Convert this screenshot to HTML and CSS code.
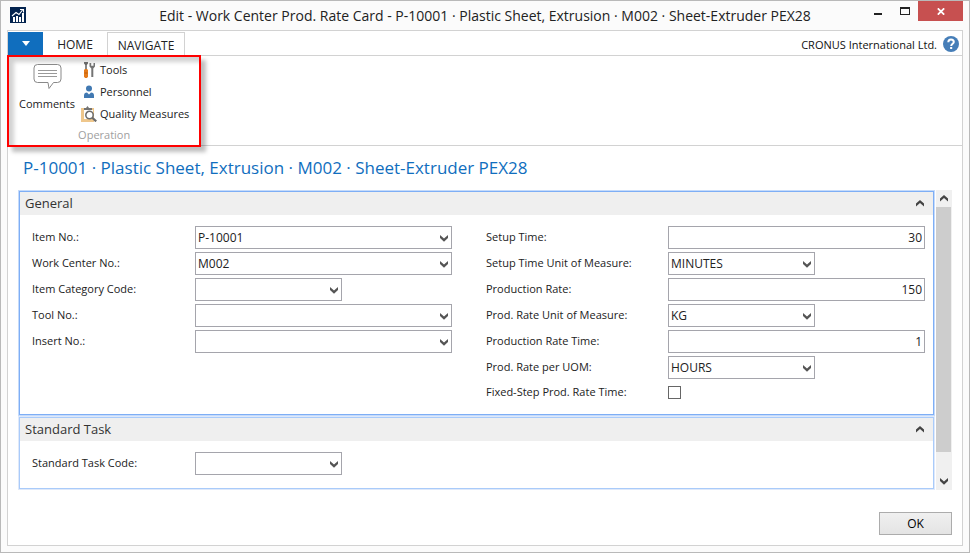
FILE: index.html
```html
<!DOCTYPE html>
<html lang="en">
<head>
<meta charset="utf-8">
<meta name="viewport" content="width=device-width, initial-scale=1">
<title>Edit - Work Center Prod. Rate Card</title>
<link rel="stylesheet" href="styles.css">
</head>
<body>
<svg class="defs" aria-hidden="true">
  <symbol id="down" viewBox="0 0 8 7"><path d="M0 0L4 3.6L8 0V3L4 6.8L0 3Z"/></symbol>
  <symbol id="up" viewBox="0 0 8 7"><path d="M0 6.4L4 3L8 6.4V3.6L4 0L0 3.6Z"/></symbol>
</svg>
<div class="window">
  <header class="titlebar">
    <div class="title-left">
      <svg class="app-icon" viewBox="0 0 16 16" aria-hidden="true">
        <rect width="16" height="16" fill="#04244f"/>
        <path d="M3 10h2v5H3zM6 9h2v6H6zM9 10h2v5H9zM12 6h2v9h-2z" fill="#fff"/>
        <path d="M2 9L6 5.500L9 7.500L12.500 3M10 2.500h3.500V5.500" fill="none" stroke="#fff" stroke-width="1.100"/>
      </svg>
    </div>
    <div class="window-title">Edit - Work Center Prod. Rate Card - P-10001 · Plastic Sheet, Extrusion · M002 · Sheet-Extruder PEX28</div>
    <div class="window-buttons">
      <button class="win-btn" aria-label="Minimize"><svg width="8" height="8" viewBox="0 0 8 8"><path d="M0 6h8v2H0z" fill="#222"/></svg></button>
      <button class="win-btn" aria-label="Maximize"><svg width="10" height="8" viewBox="0 0 10 8"><path d="M0 0h10v8H0zM1 2v5h8V2z" fill="#222" fill-rule="evenodd"/></svg></button>
      <button class="win-btn close" aria-label="Close"><svg width="8" height="7" viewBox="0 0 8 7"><path d="M.8 .3L7.200 6.700M7.200 .3L.8 6.700" stroke="#fff" stroke-width="1.700"/></svg></button>
    </div>
  </header>

  <div class="frame">
    <nav class="tabs">
      <button class="app-menu" aria-label="Application menu"><svg width="8" height="5" viewBox="0 0 8 5"><path d="M0 0h8L4 5z" fill="#fff"/></svg></button>
      <button class="tab">HOME</button>
      <button class="tab active">NAVIGATE</button>
      <div class="company">CRONUS International Ltd.</div>
      <button class="help" aria-label="Help"><svg width="16" height="16" viewBox="0 0 16 16"><circle cx="8" cy="8" r="8" fill="#467eb8"/><path d="M5.300 6.200C5.300 4.300 6.500 3.400 8 3.400S10.800 4.300 10.800 5.900C10.800 7.700 8.200 7.800 8.200 10" fill="none" stroke="#fff" stroke-width="2"/><path d="M7.100 11h2.100v2H7.100z" fill="#fff"/></svg></button>
    </nav>
    <div class="ribbon">
      <section class="group">
        <div class="group-items">
          <button class="big-action">
            <svg width="29" height="27" viewBox="0 0 29 27" fill="none"><path d="M4.500 1.500h20a3.500 3.500 0 0 1 3.500 3.500v11a3.500 3.500 0 0 1-3.500 3.500h-4l-4.500 6-1-6H4.500A3.500 3.500 0 0 1 1 16V5a3.500 3.500 0 0 1 3.500-3.500z" fill="#fff" stroke="#898989"/><path d="M5 7.500h19M5 10.500h19M5 13.500h19" stroke="#999"/></svg>
            Comments
          </button>
          <div class="actions">
            <button class="action">
              <svg width="16" height="16" viewBox="0 0 16 16"><path d="M3 0h4v1.500L5.800 3v4H4.200V3L3 1.500z" fill="#696969"/><path d="M4 7h2l1 1v6.500L6 16H4l-1-1.500V8z" fill="#e47a1b"/><path d="M3.500 11h3" stroke="#b95c0b"/><path d="M8.500 1v3.500L10.300 6.500V15h2V6.500L14 4.500V1h-1.500v2.700h-2.300V1z" fill="#747474"/></svg>Tools</button>
            <button class="action">
              <svg width="16" height="16" viewBox="0 0 16 16"><circle cx="8" cy="4.500" r="3" fill="#4179b2"/><path d="M3 14V11.500Q3 8.500 6 8.500L8 10.500L10 8.500Q13 8.500 13 11.500V14z" fill="#4179b2"/></svg>Personnel</button>
            <button class="action">
              <svg width="16" height="16" viewBox="0 0 16 16"><path d="M0 2h13v14H0z" fill="#efc78c"/><path d="M3 4h9v9H3z" fill="#fff"/><path d="M3 4V2h2L6.500 0L8 2h3v2z" fill="#737373"/><circle cx="8.500" cy="9" r="3.700" fill="#fff" stroke="#6b6b6b" stroke-width="1.500"/><path d="M11.300 11.700L15.200 15.400" stroke="#6b6b6b" stroke-width="2.200"/></svg>Quality Measures</button>
          </div>
        </div>
        <div class="group-name">Operation</div>
      </section>
    </div>

    <main class="page">
      <h1>P-10001 · Plastic Sheet, Extrusion · M002 · Sheet-Extruder PEX28</h1>
      <div class="scroll-area">
        <form class="fasttabs">
          <section class="fasttab selected">
            <button type="button" class="fasttab-head">General<svg class="chevron"><use href="#up"/></svg></button>
            <div class="fields">
              <div class="column left">
                <div class="field"><label for="item">Item No.:</label><span class="control"><select id="item"><option>P-10001</option></select><svg class="arrow"><use href="#down"/></svg></span></div>
                <div class="field"><label for="center">Work Center No.:</label><span class="control"><select id="center"><option>M002</option></select><svg class="arrow"><use href="#down"/></svg></span></div>
                <div class="field"><label for="category">Item Category Code:</label><span class="control short"><select id="category"><option></option></select><svg class="arrow"><use href="#down"/></svg></span></div>
                <div class="field"><label for="tool">Tool No.:</label><span class="control"><select id="tool"><option></option></select><svg class="arrow"><use href="#down"/></svg></span></div>
                <div class="field"><label for="insert">Insert No.:</label><span class="control"><select id="insert"><option></option></select><svg class="arrow"><use href="#down"/></svg></span></div>
              </div>
              <div class="column right">
                <div class="field"><label for="setup">Setup Time:</label><span class="control"><input id="setup" type="text" value="30"></span></div>
                <div class="field"><label for="setup-unit">Setup Time Unit of Measure:</label><span class="control short"><select id="setup-unit"><option>MINUTES</option></select><svg class="arrow"><use href="#down"/></svg></span></div>
                <div class="field"><label for="rate">Production Rate:</label><span class="control"><input id="rate" type="text" value="150"></span></div>
                <div class="field"><label for="rate-unit">Prod. Rate Unit of Measure:</label><span class="control short"><select id="rate-unit"><option>KG</option></select><svg class="arrow"><use href="#down"/></svg></span></div>
                <div class="field"><label for="rate-time">Production Rate Time:</label><span class="control"><input id="rate-time" type="text" value="1"></span></div>
                <div class="field"><label for="per">Prod. Rate per UOM:</label><span class="control short"><select id="per"><option>HOURS</option></select><svg class="arrow"><use href="#down"/></svg></span></div>
                <div class="field check"><label for="fixed">Fixed-Step Prod. Rate Time:</label><input id="fixed" type="checkbox"></div>
              </div>
            </div>
          </section>
          <section class="fasttab">
            <button type="button" class="fasttab-head">Standard Task<svg class="chevron"><use href="#up"/></svg></button>
            <div class="fields">
              <div class="column left">
                <div class="field"><label for="task">Standard Task Code:</label><span class="control short"><select id="task"><option></option></select><svg class="arrow"><use href="#down"/></svg></span></div>
              </div>
              <div class="column right"></div>
            </div>
          </section>
        </form>
        <div class="scrollbar">
          <button aria-label="Scroll up"><svg class="chevron"><use href="#up"/></svg></button>
          <div class="track"><div class="thumb"></div></div>
          <button aria-label="Scroll down"><svg class="chevron"><use href="#down"/></svg></button>
        </div>
      </div>
      <footer><button class="ok">OK</button></footer>
    </main>
  </div>
</div>
</body>
</html>
```
FILE: styles.css
```css
* { box-sizing: border-box; }

body {
  margin: 0;
  font-family: "Open Sans", "Noto Sans", sans-serif;
  font-size: 12px;
  line-height: 16px;
  color: #222;
}

button, input, select { font: inherit; color: inherit; }

button {
  margin: 0;
  padding: 0;
  border: 0;
  background: none;
}

svg { display: block; flex: none; }
.defs { position: absolute; width: 0; height: 0; }

.window {
  display: flex;
  flex-direction: column;
  min-height: 100vh;
  padding: 0 6px 6px;
  border: 1px solid #b9b9b9;
  background: #fbfbfb;
}

/* Title bar */
.titlebar {
  display: flex;
  align-items: flex-start;
  height: 29px;
}
.title-left { flex: 0 0 99px; padding: 6px 0 0 3px; }
.app-icon { width: 16px; height: 16px; }
.window-title {
  flex: 1;
  padding-top: 4px;
  font-size: 14px;
  line-height: 22px;
  text-align: center;
  white-space: nowrap;
}
.window-buttons { display: flex; }
.win-btn {
  display: flex;
  align-items: center;
  justify-content: center;
  width: 27px;
  height: 20px;
}
.win-btn.close { width: 45px; background: #c75050; }

.frame {
  display: flex;
  flex: 1;
  flex-direction: column;
  border: 1px solid #d2d2d2;
  background: #fff;
}

/* Tabs */
.tabs {
  display: flex;
  align-items: flex-end;
  height: 24px;
  padding-right: 3px;
}
.app-menu {
  display: flex;
  align-items: center;
  justify-content: center;
  width: 35px;
  height: 23px;
  background: #106ebe;
}
.tab { width: 64px; height: 23px; padding-top: 3px; }
.tab.active {
  width: 78px;
  border: 1px solid #d2d2d2;
  border-bottom: 0;
}
.company { margin-left: auto; padding-bottom: 2px; font-size: 11px; color: #111; }
.help { padding: 0 0 3px 6px; }

/* Ribbon */
.ribbon {
  display: flex;
  height: 91px;
  border-top: 1px solid #d2d2d2;
  border-bottom: 1px solid #d2d2d2;
}
.group {
  height: 92px;
  margin: -1px 0 0 -1px;
  padding: 2px 10px 0;
  border: 2px solid #f00;
  box-shadow: 5px 5px 4px rgba(0, 0, 0, .25), inset 5px 5px 4px rgba(0, 0, 0, .18);
}
.group-items { display: flex; gap: 6px; font-size: 11px; }
.big-action {
  display: flex;
  flex-direction: column;
  align-items: center;
  gap: 6px;
  padding-top: 4px;
}
.actions { display: flex; flex-direction: column; }
.action {
  display: flex;
  align-items: center;
  gap: 3px;
  height: 22px;
  white-space: nowrap;
}
.group-name {
  padding-top: 2px;
  font-size: 11px;
  text-align: center;
  color: #a0a0a0;
}

/* Page */
.page {
  display: flex;
  flex: 1;
  flex-direction: column;
  padding: 11px 10px 10px;
}
h1 {
  margin: 0 0 11px 5px;
  font-size: 17px;
  font-weight: 400;
  line-height: 22px;
  color: #106ebe;
}
.scroll-area { display: flex; gap: 1px; }
.fasttabs {
  display: flex;
  flex: 1;
  flex-direction: column;
  gap: 2px;
  padding: 1px;
}
.fasttab { border: 1px solid #a9cbfa; box-shadow: 0 0 0 1px #dfe9fa; }
.fasttab.selected { border-color: #7eaef5; box-shadow: 0 0 0 1px #c5dbfb; }
.fasttab-head {
  display: flex;
  align-items: center;
  justify-content: space-between;
  width: 100%;
  height: 23px;
  padding: 0 9px 1px 5px;
  background: #efefef;
  font-size: 13px;
  color: #333;
}
.chevron { width: 8px; height: 7px; fill: #444; }
.fields {
  display: flex;
  gap: 34px;
  padding: 11px 8px 13px 12px;
}
.selected .fields { padding-bottom: 9px; }
.column { display: flex; flex-direction: column; gap: 3px; }
.left { flex: 1 0 163px; --label: 163px; }
.right { flex: 1 0 182px; --label: 182px; }
.field { display: flex; height: 23px; }
.field label {
  width: var(--label);
  padding-top: 3px;
  font-size: 11px;
  white-space: nowrap;
}
.control { position: relative; flex: 1; }
.control.short { flex: 0 0 147px; }
.control select, .control input {
  width: 100%;
  height: 23px;
  padding: 0 2px;
  border: 1px solid #a5a5ac;
  border-radius: 0;
  background: #fff;
  appearance: none;
}
.control input { text-align: right; }
.arrow {
  position: absolute;
  top: 9px;
  right: 4px;
  width: 8px;
  height: 7px;
  fill: #555;
  pointer-events: none;
}
.check label { padding-top: 2px; }
.check input {
  width: 13px;
  height: 13px;
  margin: 4px 0 0;
  border: 1px solid #666;
  background: #fff;
  appearance: none;
}
.check input:checked { background: #106ebe; }

/* Scroll bar */
.scrollbar {
  display: flex;
  flex-direction: column;
  width: 16px;
  background: #f0f0f0;
}
.scrollbar button {
  display: flex;
  align-items: center;
  justify-content: center;
  height: 17px;
}
.track { flex: 1; padding-right: 1px; }
.thumb { height: 92%; background: #cdcdcd; }

footer {
  display: flex;
  justify-content: flex-end;
  margin-top: auto;
}
.ok {
  width: 73px;
  height: 23px;
  border: 1px solid #acacac;
  background: linear-gradient(#f0f0f0, #e4e4e4);
  color: #000;
}
```
